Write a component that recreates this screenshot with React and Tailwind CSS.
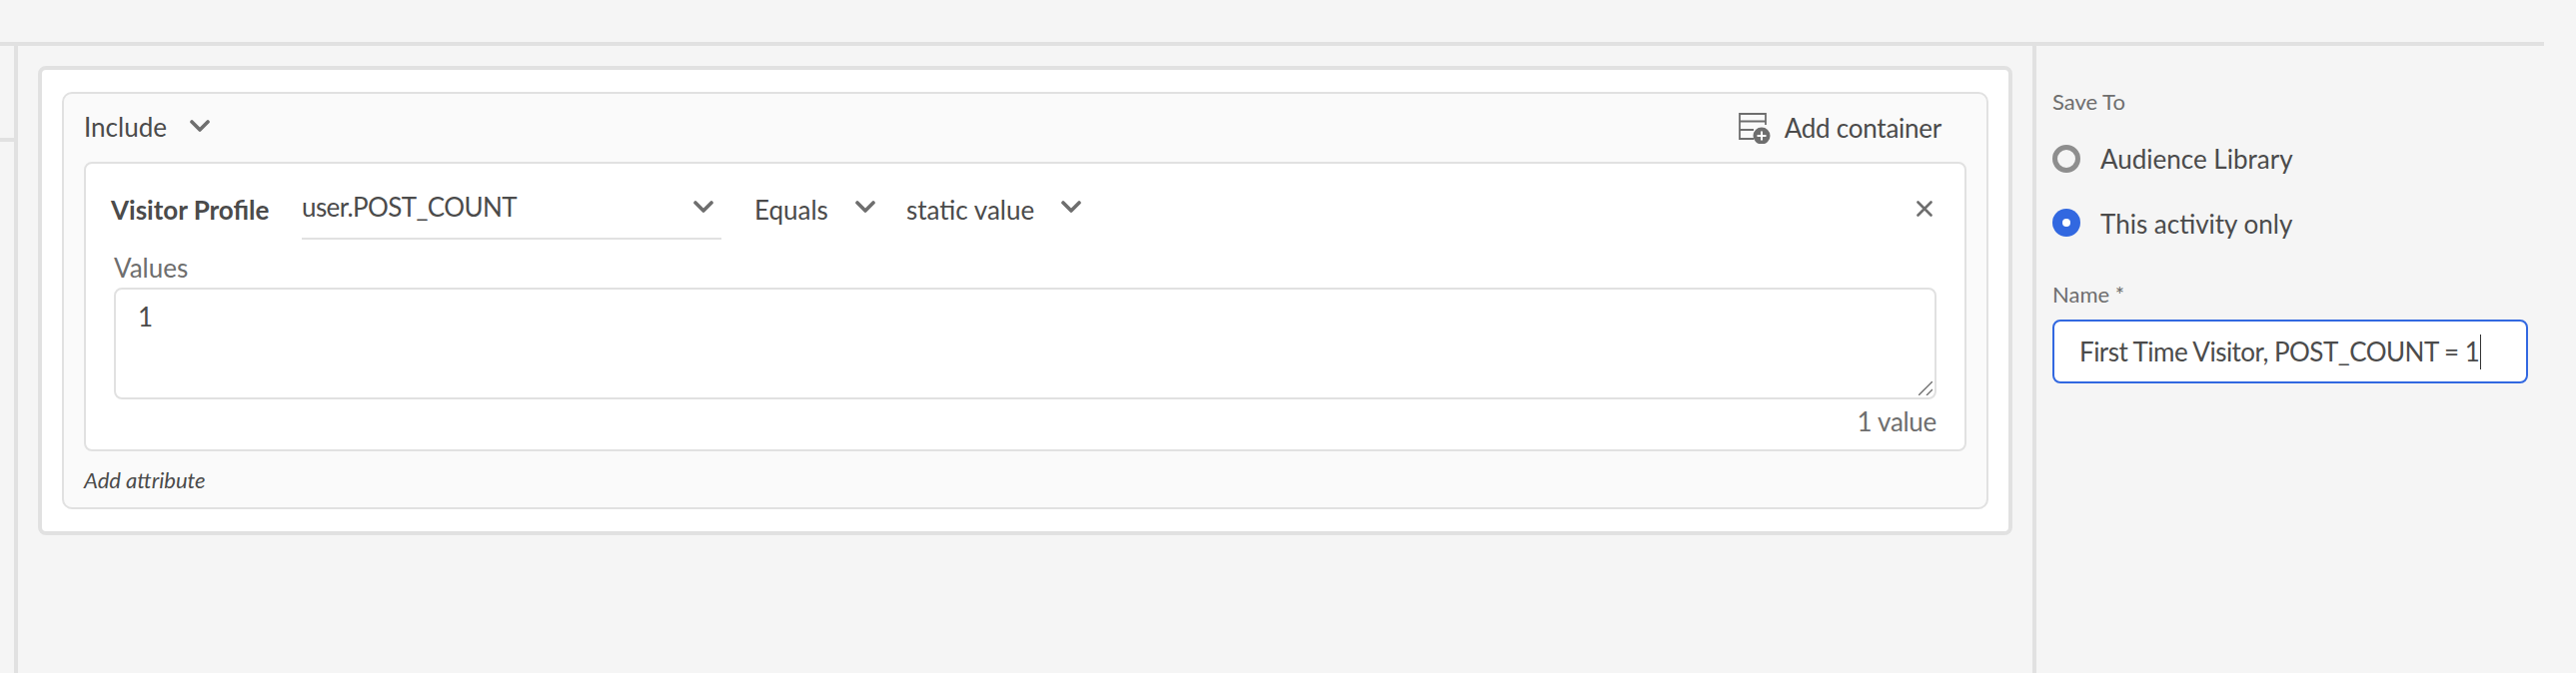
const Chevron = ({ className = "" }) => (
  <svg viewBox="0 0 20 12" className={`w-[20px] h-[12px] shrink-0 ${className}`} fill="none" stroke="#6e6e6e" strokeWidth="3.6" strokeLinecap="round" strokeLinejoin="round">
    <path d="M2 2 L10 10 L18 2" />
  </svg>
);

const AddContainerIcon = () => (
  <svg viewBox="0 0 32 31" className="w-[32px] h-[31px] shrink-0" fill="none">
    <path d="M27 12V1H1v25h14M1 8.5h26M1 17h14" stroke="#6e6e6e" strokeWidth="1.8" />
    <circle cx="23" cy="23" r="8.5" fill="#6e6e6e" />
    <path d="M23 18.5v9M18.5 23h9" stroke="#fff" strokeWidth="2" />
  </svg>
);

const CloseIcon = () => (
  <svg viewBox="0 0 16 16" className="w-[16px] h-[16px] shrink-0" fill="none" stroke="#6e6e6e" strokeWidth="2.6" strokeLinecap="round">
    <path d="M1.5 1.5 L14.5 14.5 M14.5 1.5 L1.5 14.5" />
  </svg>
);

export default function App() {
  return (
    <div className="w-[2578px] h-[674px] overflow-hidden bg-[#f5f5f5] text-[#4b4b4b] flex flex-col font-['Lato',sans-serif] text-[26px] antialiased">
      <div className="w-[2546px] h-[46px] shrink-0 border-b-4 border-[#e1e1e1]" />
      <div className="flex flex-1">
        <div className="w-[18px] shrink-0 border-r-4 border-[#e1e1e1]">
          <div className="mt-[92px] h-[4px] bg-[#e1e1e1]" />
        </div>
        <main className="w-[2016px] shrink-0 px-[20px] pt-[20px]">
          <div className="h-[470px] bg-white border-4 border-[#e1e1e1] rounded-[8px] px-[20px] pt-[22px]">
            <div className="h-[418px] bg-[#fafafa] border-2 border-[#e1e1e1] rounded-[10px] px-[20px] flex flex-col">
              <div className="h-[68px] shrink-0 flex items-center pr-[25px]">
                <span className="w-[106px] leading-[30px] mb-[3px]">Include</span>
                <Chevron className="mb-[4px]" />
                <div className="ml-auto flex items-center gap-[14px]">
                  <AddContainerIcon />
                  <span className="leading-[30px] tracking-[-0.25px]">Add container</span>
                </div>
              </div>
              <div className="h-[290px] shrink-0 bg-white border-2 border-[#e1e1e1] rounded-[8px] pl-[25px] pr-[32px] pt-[26px]">
                <div className="flex items-start h-[50px]">
                  <span className="w-[191px] shrink-0 font-bold leading-[40px]">Visitor Profile</span>
                  <div className="w-[420px] h-[50px] shrink-0 border-b-2 border-[#e1e1e1] flex justify-between pr-[8px]">
                    <span className="leading-[34px] tracking-[-0.6px]">user.POST_COUNT</span>
                    <Chevron className="mt-[11px]" />
                  </div>
                  <span className="ml-[33px] leading-[40px] w-[73px]">Equals</span>
                  <Chevron className="ml-[28px] mt-[11px]" />
                  <span className="ml-[31px] leading-[40px] w-[127px] whitespace-nowrap">static value</span>
                  <Chevron className="ml-[28px] mt-[11px]" />
                  <div className="ml-auto mt-[11px]"><CloseIcon /></div>
                </div>
                <div className="pl-[3px]">
                  <div className="mt-[13px] leading-[30px] text-[#6e6e6e]">Values</div>
                  <div className="relative mt-[5px] w-[1824px] h-[112px]">
                    <textarea
                      defaultValue="1"
                      className="block w-full h-full resize-none bg-white border-2 border-[#e1e1e1] rounded-[8px] px-[22px] py-[12px] leading-[30px] text-[#4b4b4b] outline-none"
                    />
                    <svg viewBox="0 0 14 14" className="absolute right-[4px] bottom-[4px] w-[14px] h-[14px]" fill="none" stroke="#6e6e6e" strokeWidth="1.4">
                      <path d="M0 14 L14 0 M8 14 L14 8" />
                    </svg>
                  </div>
                  <div className="text-right text-[#6e6e6e] leading-[30px] mt-[7px] w-[1824px] tracking-[-0.3px]">1 value</div>
                </div>
              </div>
              <div className="flex-1 flex items-center pt-[2px]">
                <span className="italic text-[22px] leading-[28px]">Add attribute</span>
              </div>
            </div>
          </div>
        </main>
        <aside className="flex-1 border-l-4 border-[#e1e1e1] pl-[16px] pt-[42px]">
          <div className="text-[22px] leading-[28px] text-[#6e6e6e]">Save To</div>
          <div className="mt-[29px] flex items-center h-[28px]">
            <span className="w-[28px] h-[28px] rounded-full border-[5px] border-[#8e8e8e] bg-[#f5f5f5] shrink-0" />
            <span className="ml-[20px] leading-[30px]">Audience Library</span>
          </div>
          <div className="mt-[36px] flex items-center h-[28px]">
            <span className="w-[28px] h-[28px] rounded-full bg-[#3268e0] shrink-0 flex items-center justify-center">
              <span className="w-[8px] h-[8px] rounded-full bg-white" />
            </span>
            <span className="ml-[20px] mt-[1px] leading-[30px]">This activity only</span>
          </div>
          <div className="mt-[44px] text-[22px] leading-[28px] text-[#6e6e6e]">Name *</div>
          <div className="mt-[11px] w-[476px] h-[64px] bg-white border-2 border-[#3268e0] rounded-[8px] pl-[25px] flex items-center">
            <span className="leading-[30px] tracking-[-0.52px]">First Time Visitor, POST_COUNT = 1</span>
            <span className="ml-[1px] w-[1px] h-[35px] bg-[#333]" />
          </div>
        </aside>
      </div>
    </div>
  );
}
